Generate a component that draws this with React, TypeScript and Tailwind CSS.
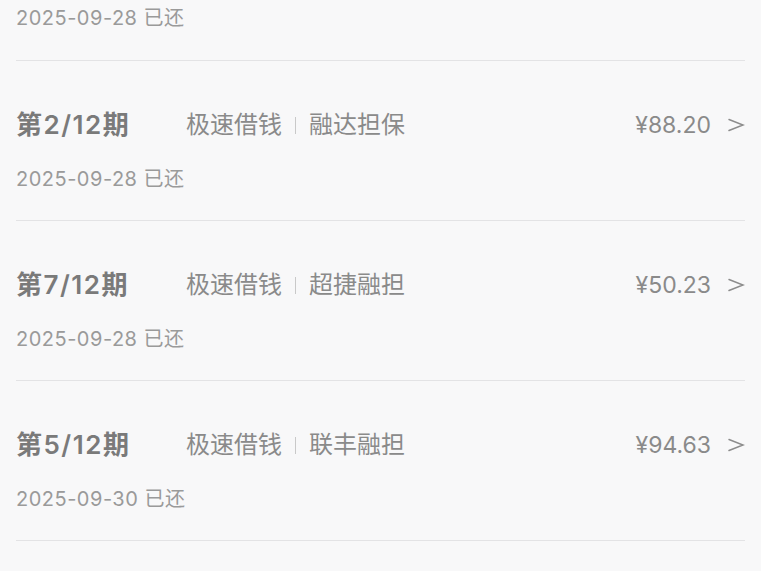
import React from "react";

type Row = { period: string; product: string; guarantor: string; amount: string; date: string };

const rows: Row[] = [
  { period: "第2/12期", product: "极速借钱", guarantor: "融达担保", amount: "¥88.20", date: "2025-09-28 已还" },
  { period: "第7/12期", product: "极速借钱", guarantor: "超捷融担", amount: "¥50.23", date: "2025-09-28 已还" },
  { period: "第5/12期", product: "极速借钱", guarantor: "联丰融担", amount: "¥94.63", date: "2025-09-30 已还" },
];

function Chevron() {
  return (
    <svg width="18" height="14" viewBox="0 0 18 14" fill="none" className="ml-[16px]">
      <polyline points="2,1.5 16,7 2,12.5" stroke="#8c8c8c" strokeWidth="1.5" strokeLinejoin="miter" strokeLinecap="round" />
    </svg>
  );
}

export default function App() {
  return (
    <div
      className="w-[761px] h-[571px] overflow-hidden bg-[#f8f8f9]"
      style={{ fontFamily: 'Inter, "Noto Sans CJK SC", sans-serif' }}
    >
      <div className="px-[16px]">
        <div className="h-[61px] border-b border-[#e3e3e5] pt-[4px] box-border">
          <div className="text-[20px] text-[#9a9a9a] leading-[28px] tracking-[0.5px]">2025-09-28 已还</div>
        </div>
        {rows.map((r, i) => (
          <div key={i} className="h-[160px] border-b border-[#e3e3e5] flex flex-col pt-[48px] box-border">
            <div className="flex items-center h-[32px]">
              <div className="w-[170px] text-[26px] font-semibold text-[#7a7a7a] leading-[32px] tracking-[1.5px]">
                {r.period}
              </div>
              <div className="flex items-center text-[24px] text-[#8a8a8a] leading-[32px]">
                <span>{r.product}</span>
                <span className="w-px h-[17px] bg-[#c9c9c9] mx-[13px]" />
                <span>{r.guarantor}</span>
              </div>
              <div className="flex-1" />
              <div className="text-[23px] text-[#8a8a8a] leading-[32px]">{r.amount}</div>
              <Chevron />
            </div>
            <div className="mt-[24px] text-[20px] text-[#9a9a9a] leading-[28px] tracking-[0.5px]">{r.date}</div>
          </div>
        ))}
      </div>
    </div>
  );
}
